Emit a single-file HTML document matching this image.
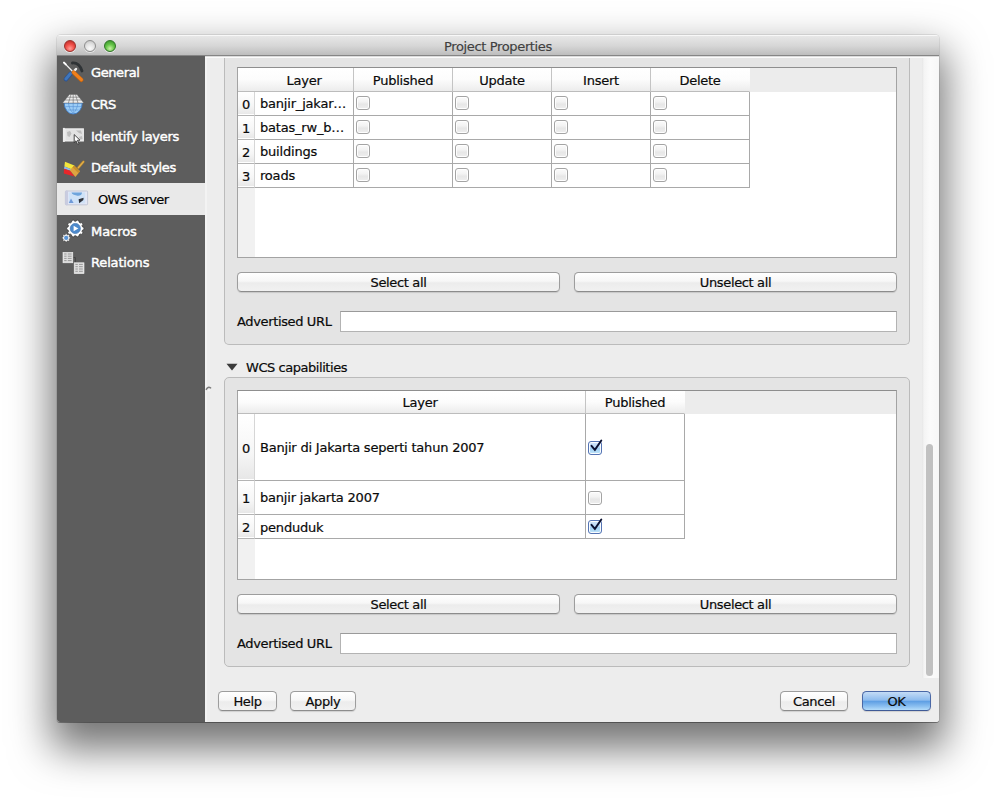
<!DOCTYPE html>
<html lang="en">
<head>
<meta charset="utf-8">
<title>Project Properties</title>
<style>
*{box-sizing:border-box;margin:0;padding:0}
html,body{width:996px;height:800px;overflow:hidden;background:#fff}
body{font-family:"DejaVu Sans","Liberation Sans",sans-serif;font-size:13px;letter-spacing:-0.36px;color:#0a0a0a;position:relative;-webkit-text-stroke:0.2px #0a0a0a}
.abs{position:absolute}
#win{position:absolute;left:57px;top:35px;width:882px;height:687px;border-radius:4px 4px 3px 3px;background:#ededed;overflow:hidden}
#shadow{position:absolute;left:57px;top:35px;width:882px;height:687px;border-radius:4px 4px 3px 3px;background:#ededed;
 box-shadow:0 0 0 1px rgba(0,0,0,.08),0 1px 0 0 rgba(0,0,0,.3),0 21px 40px 6px rgba(0,0,0,.55)}
#in{position:absolute;left:-1px;top:-1px;width:884px;height:688px}
#tb{position:absolute;left:0;top:1px;width:884px;height:21px;
 background:linear-gradient(#e7e7e7 0,#d7d7d7 50%,#bdbdbd 100%);border-bottom:1px solid #858585;border-top:1px solid #f8f8f8}
#tb .t{position:absolute;left:0;right:0;top:3px;text-align:center;color:#404040;line-height:16px;-webkit-text-stroke:0.15px #404040}
.tl{position:absolute;top:4px;box-shadow:0 1px 0 rgba(255,255,255,.55);width:12px;height:12px;border-radius:50%}
#side{position:absolute;left:0;top:22px;width:149px;height:666px;background:#5d5d5d}
.it{position:absolute;left:0;width:149px;height:32px;color:#fff;line-height:34px;padding-left:35px;letter-spacing:-0.5px;-webkit-text-stroke:0.45px #fff;text-shadow:0 1px 1px rgba(0,0,0,.3)}
.it.sel{background:#e9e9e9;color:#000;letter-spacing:-0.62px;-webkit-text-stroke:0.2px #000;text-shadow:none;padding-left:42px}
.it svg{position:absolute;left:6px}
.gb{position:absolute;left:168px;width:686px;background:#e4e4e4;border:1px solid #bbb;border-radius:5px}
.tbl{position:absolute;left:181px;width:660px;background:#fff;border:1px solid #a3a3a3;border-top-color:#8e8e8e}
.hd{position:absolute;left:0;top:0;height:24px;right:0;background:#ececec}
.hc{position:absolute;letter-spacing:-0.25px;top:0;height:24px;line-height:26px;text-align:center;background:linear-gradient(#fff 0,#fcfcfc 50%,#ececec 100%);border-right:1px solid #c4c4c4;border-bottom:1px solid #bcbcbc}
.rh{position:absolute;left:0;width:17px;text-align:center;background:linear-gradient(#fff 0,#f6f6f6 60%,#e6e6e6 100%);border-right:1px solid #d6d6d6;border-bottom:1px solid #b4b4b4;-webkit-text-stroke-width:0.2px;box-shadow:inset 0 1px 0 #fff,inset 0 -1px 0 #fff}
.rhfill{position:absolute;left:0;width:17px;background:#f1f1f1}
.c{position:absolute;letter-spacing:-0.2px;border-right:1px solid #a9a9a9;border-bottom:1px solid #a9a9a9;padding-left:6px;white-space:nowrap;overflow:hidden}
.cb{position:absolute;left:2px;top:4px;width:14px;height:14px;border:1px solid #a4a4a4;border-radius:3px;background:linear-gradient(#fbfbfb 0,#f3f3f3 40%,#e7e7e7 60%,#eee 100%);box-shadow:inset 0 0 0 1px rgba(255,255,255,.9)}
.cb.on{border-color:#5574b4;background:linear-gradient(#d4e6fa 0,#b4d6f6 48%,#9dcdf3 52%,#c2e6fa 100%)}
.btn{position:absolute;height:20px;border:1px solid #9d9d9d;border-radius:4.5px;background:linear-gradient(#fff 0,#f7f7f7 45%,#ececec 55%,#f1f1f1 100%);text-align:center;line-height:19px;box-shadow:0 1px 1px rgba(0,0,0,.13);border-bottom-color:#8c8c8c}
.btn.def{border-color:#4a68a6;border-bottom-color:#3f5a96;background:linear-gradient(#c4dcf6 0,#8ebcee 45%,#5f9fe4 52%,#8cc0f0 80%,#b4dcfa 100%)}
.inp{position:absolute;height:21px;background:#fff;border:1px solid #b3b3b3;border-top-color:#9a9a9a}
.lbl{position:absolute;line-height:16px}
</style>
</head>
<body>
<div id="shadow"></div>
<div id="win"><div id="in">
 <div id="tb">
  <div class="tl" style="left:8px;background:radial-gradient(circle at 50% 75%,#ff9d96 0,#f2524b 45%,#c2302b 85%,#9c2622 100%);border:1px solid #9a2f2a"></div>
  <div class="tl" style="left:28px;background:radial-gradient(circle at 50% 75%,#fbfbfb 0,#e2e2e2 50%,#c4c4c4 90%,#b0b0b0 100%);border:1px solid #8e8e8e"></div>
  <div class="tl" style="left:48px;background:radial-gradient(circle at 50% 75%,#c9f2a6 0,#68c64a 45%,#3f9a2f 85%,#2f7a24 100%);border:1px solid #2f7426"></div>
  <div class="t">Project Properties</div>
 </div>
 <div id="side">
  <div class="it" style="top:0px;letter-spacing:-0.4px"><svg style="top:4px" width="24" height="24" viewBox="0 0 24 24"><path d="M10.4 3 C14.4 2.6 18 5 20 11" fill="none" stroke="#2f3336" stroke-width="2.8" stroke-linecap="round"/><path d="M14 9 L12.4 10.8" stroke="#f0f0f0" stroke-width="2.4" stroke-linecap="round"/><path d="M8.6 13.8 L3.8 19.2" stroke="#2b5392" stroke-width="4.4" stroke-linecap="round"/><path d="M8.6 13.6 L3.9 18.9" stroke="#3f76bc" stroke-width="3" stroke-linecap="round"/><path d="M2 2.6 L10.4 11.2" stroke="#f2f2f2" stroke-width="1.3" stroke-linecap="round"/><path d="M2 2.6 L3.8 4.4" stroke="#fff" stroke-width="2" stroke-linecap="round"/><path d="M11.6 12.4 L19.4 19.9" stroke="#c2620f" stroke-width="4.2" stroke-linecap="round"/><path d="M11.6 12.3 L19.4 19.7" stroke="#ef801d" stroke-width="3" stroke-linecap="round"/></svg>General</div>
  <div class="it" style="top:32px;letter-spacing:-0.5px"><svg style="top:4px" width="24" height="24" viewBox="0 0 24 24"><path d="M2.2 11 A9 11 0 0 0 20.2 11 Z" fill="#9ccdf6" stroke="#3f7ecb" stroke-width="0.9"/><path d="M11.2 11 V21.5 M6.5 11 C6.8 15 8.6 19 11.2 21.5 M15.9 11 C15.6 15 13.8 19 11.2 21.5 M3.4 14.6 H19 M5.8 18 H16.6" fill="none" stroke="#5590d4" stroke-width="0.6"/><path d="M7.4 2.4 H15 L21.8 11 H0.6 Z" fill="#ececec" stroke="#555" stroke-width="0.4"/><path d="M5.2 5.2 H17.2 M3 8 H19.4 M11.2 2.4 V11 M9 2.4 L6.4 11 M13.4 2.4 L16 11" fill="none" stroke="#606060" stroke-width="0.55"/></svg>CRS</div>
  <div class="it" style="top:64px;letter-spacing:-0.31px"><svg style="top:4px" width="24" height="24" viewBox="0 0 24 24"><rect x="1" y="4.3" width="20.9" height="13.2" fill="#f4f4f4"/><rect x="3.4" y="5.3" width="17.6" height="11.2" fill="#e2e2e2"/><rect x="0.9" y="3.9" width="2" height="14" fill="#ececec"/><path d="M5 8 L8 7 L9.5 9.5 L7.5 13 L5.5 12 Z M14 6.5 L19 6.5 L20 10 L17 9 Z M17 13 L20 12 L20.5 15 L18 15.5 Z" fill="#bdbdbd"/><path d="M12.2 10.6 L12.2 18.6 L14 16.8 L15.6 20.4 L17 19.8 L15.4 16.3 L18 16.2 Z" fill="#fff" stroke="#333" stroke-width="0.9" stroke-linejoin="round"/></svg>Identify layers</div>
  <div class="it" style="top:95px;letter-spacing:-0.33px"><svg style="top:5px" width="24" height="24" viewBox="0 0 24 24"><path d="M21.4 5.8 L16.4 11.6" stroke="#b8862c" stroke-width="2.5" stroke-linecap="round"/><path d="M21.4 5.8 L16.4 11.6" stroke="#e3b04c" stroke-width="1.3" stroke-linecap="round"/><path d="M3 5.8 L12.4 9.6 L9.4 13.2 L2.4 10.6 Z" fill="#f3e63c"/><path d="M2.4 10.6 L9.4 13.2 L8.4 14.8 L2 12.8 Z" fill="#8fb8ea"/><path d="M2 12.8 L8.4 14.8 L12.4 20.4 L1.8 17.6 Z" fill="#e8262a"/><path d="M12.2 9.4 L18 15.2 L13.4 21 L7.8 14.2 Z" fill="#dfa540"/><path d="M12.2 9.4 L18 15.2 L16.4 17.2 L10.6 11.2 Z" fill="#c98f2c"/></svg>Default styles</div>
  <div class="it sel" style="top:127px"><svg style="top:5px" width="28" height="24" viewBox="0 0 28 24"><rect x="3.4" y="3" width="22.2" height="13.8" rx="0.8" fill="#e4e8f6" stroke="#b9bfd0" stroke-width="0.8"/><rect x="3.4" y="2.6" width="2.6" height="14.6" rx="1" fill="#c9cce0"/><rect x="6.6" y="4.4" width="16.6" height="11" fill="#cfe2f7"/><path d="M9.5 4.6 H20 C20 7.4 17 8.4 14.6 7.6 C12 7 10 6.6 9.5 4.6 Z" fill="#6ea4dc"/><path d="M6.8 15 L9 10.4 L11.6 15 Z" fill="#6f9ad8"/><path d="M16.6 11.2 L21.6 9.8 L21.4 12 L17.2 15.2 Z" fill="#30343c"/></svg>OWS server</div>
  <div class="it" style="top:159px;letter-spacing:-0.06px"><svg style="top:4px" width="24" height="24" viewBox="0 0 24 24"><path d="M20.55 8.02 L21.93 8.41 L21.93 10.59 L20.55 10.98 L20.03 12.57 L20.92 13.69 L19.64 15.46 L18.30 14.96 L16.95 15.94 L17.00 17.37 L14.93 18.05 L14.14 16.85 L12.46 16.85 L11.67 18.05 L9.60 17.37 L9.65 15.94 L8.30 14.96 L6.96 15.46 L5.68 13.69 L6.57 12.57 L6.05 10.98 L4.67 10.59 L4.67 8.41 L6.05 8.02 L6.57 6.43 L5.68 5.31 L6.96 3.54 L8.30 4.04 L9.65 3.06 L9.60 1.63 L11.67 0.95 L12.46 2.15 L14.14 2.15 L14.93 0.95 L17.00 1.63 L16.95 3.06 L18.30 4.04 L19.64 3.54 L20.92 5.31 L20.03 6.43 Z" fill="#fff" stroke="#3a3a3a" stroke-width="0.7" stroke-linejoin="round"/><circle cx="13.3" cy="9.5" r="5.1" fill="#4d8acc" stroke="#346aa8" stroke-width="0.6"/><path d="M11.6 6.8 L16.4 9.5 L11.6 12.2 Z" fill="#fff"/><path d="M7.49 18.05 L8.25 18.26 L8.25 19.54 L7.49 19.75 L7.13 20.63 L7.52 21.31 L6.61 22.22 L5.93 21.83 L5.05 22.19 L4.84 22.95 L3.56 22.95 L3.35 22.19 L2.47 21.83 L1.79 22.22 L0.88 21.31 L1.27 20.63 L0.91 19.75 L0.15 19.54 L0.15 18.26 L0.91 18.05 L1.27 17.17 L0.88 16.49 L1.79 15.58 L2.47 15.97 L3.35 15.61 L3.56 14.85 L4.84 14.85 L5.05 15.61 L5.93 15.97 L6.61 15.58 L7.52 16.49 L7.13 17.17 Z" fill="#f4f4f4" stroke="#444" stroke-width="0.5" stroke-linejoin="round"/><circle cx="4.2" cy="18.9" r="2.1" fill="#5a94d4"/></svg>Macros</div>
  <div class="it" style="top:190px;letter-spacing:-0.16px"><svg style="top:4px" width="24" height="26" viewBox="0 0 24 26"><path d="M11.4 7.5 H13.4 V12.4" fill="none" stroke="#444" stroke-width="1"/><rect x="1" y="2.4" width="9.8" height="10.4" fill="#dedede" stroke="#f2f2f2" stroke-width="0.6"/><path d="M2.2 4.0 h2.4 M5.8 4.0 h3.8000000000000007" stroke="#909090" stroke-width="0.9"/><path d="M2.2 6.2 h2.4 M5.8 6.2 h3.8000000000000007" stroke="#909090" stroke-width="0.9"/><path d="M2.2 8.4 h2.4 M5.8 8.4 h3.8000000000000007" stroke="#909090" stroke-width="0.9"/><path d="M2.2 10.6 h2.4 M5.8 10.6 h3.8000000000000007" stroke="#909090" stroke-width="0.9"/><rect x="12.2" y="12.8" width="9.8" height="10.8" fill="#dedede" stroke="#f2f2f2" stroke-width="0.6"/><path d="M13.399999999999999 14.4 h2.4 M17.0 14.4 h3.8000000000000007" stroke="#909090" stroke-width="0.9"/><path d="M13.399999999999999 16.7 h2.4 M17.0 16.7 h3.8000000000000007" stroke="#909090" stroke-width="0.9"/><path d="M13.399999999999999 19.0 h2.4 M17.0 19.0 h3.8000000000000007" stroke="#909090" stroke-width="0.9"/><path d="M13.399999999999999 21.3 h2.4 M17.0 21.3 h3.8000000000000007" stroke="#909090" stroke-width="0.9"/></svg>Relations</div>
 </div>
 <!-- scrollbar -->
 <div class="abs" style="left:866px;top:22px;width:17px;height:622px;background:linear-gradient(90deg,#e6e6e6 0,#f4f4f4 2px,#fbfbfb 50%,#f7f7f7 100%)"></div>
 <div class="abs" style="left:870px;top:410px;width:7px;height:232px;border-radius:4px;background:#c1c1c1"></div>
 <!-- splitter mark -->
 <div class="abs" style="left:149px;top:22px;width:2px;height:666px;background:#f3f3f3"></div>
 <div class="abs" style="left:149px;top:22px;width:735px;height:2px;background:linear-gradient(#dcdcdc 0,#dcdcdc 50%,#fbfbfb 50%,#fbfbfb 100%);z-index:3"></div>
 <svg class="abs" style="left:149px;top:350px" width="8" height="8" viewBox="0 0 8 8"><path d="M1.3 5.4 Q3 2.2 5.6 3.9" fill="none" stroke="#7c7c7c" stroke-width="1.5" stroke-linecap="round"/><circle cx="4" cy="6.4" r="0.9" fill="#fbfbfb"/></svg>
 <!-- group 1 -->
 <div class="gb" style="top:22px;height:289px;border-top:none;border-radius:0 0 5px 5px"></div>
 <div class="tbl" style="top:33px;height:191px">
  <div class="hd"></div>
  <div class="rhfill" style="top:24px;bottom:0"></div>
  <div class="hc" style="left:0;width:116px;padding-left:17px">Layer</div>
  <div class="hc" style="left:116px;width:99px">Published</div>
  <div class="hc" style="left:215px;width:99px">Update</div>
  <div class="hc" style="left:314px;width:99px">Insert</div>
  <div class="hc" style="left:413px;width:99px;border-right-color:transparent">Delete</div>
  <div class="rh" style="top:24px;height:24px;line-height:26px">0</div>
  <div class="c" style="left:17px;top:24px;width:99px;height:24px;line-height:24px;padding-left:5px">banjir_jakar…</div>
  <div class="c" style="left:116px;top:24px;width:99px;height:24px"><span class="cb"></span></div>
  <div class="c" style="left:215px;top:24px;width:99px;height:24px"><span class="cb"></span></div>
  <div class="c" style="left:314px;top:24px;width:99px;height:24px"><span class="cb"></span></div>
  <div class="c" style="left:413px;top:24px;width:99px;height:24px"><span class="cb"></span></div>
  <div class="rh" style="top:48px;height:24px;line-height:26px">1</div>
  <div class="c" style="left:17px;top:48px;width:99px;height:24px;line-height:24px;padding-left:5px">batas_rw_b…</div>
  <div class="c" style="left:116px;top:48px;width:99px;height:24px"><span class="cb"></span></div>
  <div class="c" style="left:215px;top:48px;width:99px;height:24px"><span class="cb"></span></div>
  <div class="c" style="left:314px;top:48px;width:99px;height:24px"><span class="cb"></span></div>
  <div class="c" style="left:413px;top:48px;width:99px;height:24px"><span class="cb"></span></div>
  <div class="rh" style="top:72px;height:24px;line-height:26px">2</div>
  <div class="c" style="left:17px;top:72px;width:99px;height:24px;line-height:24px;padding-left:5px">buildings</div>
  <div class="c" style="left:116px;top:72px;width:99px;height:24px"><span class="cb"></span></div>
  <div class="c" style="left:215px;top:72px;width:99px;height:24px"><span class="cb"></span></div>
  <div class="c" style="left:314px;top:72px;width:99px;height:24px"><span class="cb"></span></div>
  <div class="c" style="left:413px;top:72px;width:99px;height:24px"><span class="cb"></span></div>
  <div class="rh" style="top:96px;height:24px;line-height:26px">3</div>
  <div class="c" style="left:17px;top:96px;width:99px;height:24px;line-height:24px;padding-left:5px">roads</div>
  <div class="c" style="left:116px;top:96px;width:99px;height:24px"><span class="cb"></span></div>
  <div class="c" style="left:215px;top:96px;width:99px;height:24px"><span class="cb"></span></div>
  <div class="c" style="left:314px;top:96px;width:99px;height:24px"><span class="cb"></span></div>
  <div class="c" style="left:413px;top:96px;width:99px;height:24px"><span class="cb"></span></div>
 </div>
 <div class="btn" style="left:181px;top:238px;width:323px">Select all</div>
 <div class="btn" style="left:518px;top:238px;width:323px">Unselect all</div>
 <div class="lbl" style="left:181px;top:280px">Advertised URL</div>
 <div class="inp" style="left:284px;top:277px;width:557px"></div>
 <!-- WCS heading -->
 <svg class="abs" style="left:170px;top:329px" width="12" height="8" viewBox="0 0 12 8"><path d="M0.5 0.8 H11.5 L6 7.4 Z" fill="#3b3b3b"/></svg>
 <div class="lbl" style="left:190px;top:326px;letter-spacing:-0.45px">WCS capabilities</div>
 <!-- group 2 -->
 <div class="gb" style="top:343px;height:290px"></div>
 <div class="tbl" style="top:356px;height:190px">
  <div class="hd" style="height:23px"></div>
  <div class="rhfill" style="top:23px;bottom:0"></div>
  <div class="hc" style="left:0;width:348px;padding-left:17px;height:23px;line-height:24px">Layer</div>
  <div class="hc" style="left:348px;width:99px;border-right-color:transparent;height:23px;line-height:24px">Published</div>
  <div class="rh" style="top:23px;height:67px;line-height:69px">0</div>
  <div class="c" style="left:17px;top:23px;width:331px;height:67px;line-height:67px;padding-left:5px">Banjir di Jakarta seperti tahun 2007</div>
  <div class="c" style="left:348px;top:23px;width:99px;height:67px"><span style="top:27px" class="cb on"><svg width="18" height="18" viewBox="0 0 18 18" style="position:absolute;left:-1px;top:-5px;overflow:visible"><path d="M3.5 8.8 L6.9 12.9 L13.3 3.5" fill="none" stroke="#0b1030" stroke-width="1.9" stroke-linecap="round" stroke-linejoin="miter"/></svg></span></div>
  <div class="rh" style="top:90px;height:34px;line-height:36px">1</div>
  <div class="c" style="left:17px;top:90px;width:331px;height:34px;line-height:34px;padding-left:5px">banjir jakarta 2007</div>
  <div class="c" style="left:348px;top:90px;width:99px;height:34px"><span style="top:10px" class="cb"></span></div>
  <div class="rh" style="top:124px;height:24px;line-height:26px">2</div>
  <div class="c" style="left:17px;top:124px;width:331px;height:24px;line-height:25px;padding-left:5px">penduduk</div>
  <div class="c" style="left:348px;top:124px;width:99px;height:24px"><span style="top:5px" class="cb on"><svg width="18" height="18" viewBox="0 0 18 18" style="position:absolute;left:-1px;top:-5px;overflow:visible"><path d="M3.5 8.8 L6.9 12.9 L13.3 3.5" fill="none" stroke="#0b1030" stroke-width="1.9" stroke-linecap="round" stroke-linejoin="miter"/></svg></span></div>
 </div>
 <div class="btn" style="left:181px;top:560px;width:323px">Select all</div>
 <div class="btn" style="left:518px;top:560px;width:323px">Unselect all</div>
 <div class="lbl" style="left:181px;top:602px">Advertised URL</div>
 <div class="inp" style="left:284px;top:599px;width:557px"></div>
 <!-- bottom buttons -->
 <div class="btn" style="left:162px;top:657px;width:59px">Help</div>
 <div class="btn" style="left:234px;top:657px;width:66px">Apply</div>
 <div class="btn" style="left:724px;top:657px;width:68px">Cancel</div>
 <div class="btn def" style="left:806px;top:657px;width:69px">OK</div>
</div></div>
</body>
</html>
